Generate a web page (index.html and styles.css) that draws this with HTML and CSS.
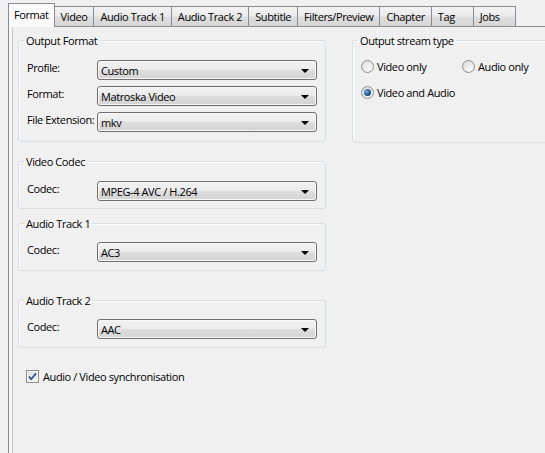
FILE: index.html
```html
<!DOCTYPE html>
<html>
<head>
  <title>Format</title>
  <link rel="stylesheet" href="styles.css">
</head>
<body>
  <div class="tabs">
    <div class="tab active">Format</div>
    <div class="tab">Video</div>
    <div class="tab">Audio Track 1</div>
    <div class="tab">Audio Track 2</div>
    <div class="tab">Subtitle</div>
    <div class="tab">Filters/Preview</div>
    <div class="tab">Chapter</div>
    <div class="tab wide">Tag</div>
    <div class="tab wide">Jobs</div>
  </div>

  <div class="pane">
    <div class="col-left">
      <fieldset class="group output">
        <legend>Output Format</legend>
        <div class="row">
          <label>Profile:</label>
          <div class="combo">Custom<span class="arrow"></span></div>
        </div>
        <div class="row">
          <label>Format:</label>
          <div class="combo">Matroska Video<span class="arrow"></span></div>
        </div>
        <div class="row">
          <label>File Extension:</label>
          <div class="combo">mkv<span class="arrow"></span></div>
        </div>
      </fieldset>

      <fieldset class="group video">
        <legend>Video Codec</legend>
        <div class="row">
          <label>Codec:</label>
          <div class="combo">MPEG-4 AVC / H.264<span class="arrow"></span></div>
        </div>
      </fieldset>

      <fieldset class="group audio1">
        <legend>Audio Track 1</legend>
        <div class="row">
          <label>Codec:</label>
          <div class="combo">AC3<span class="arrow"></span></div>
        </div>
      </fieldset>

      <fieldset class="group audio2">
        <legend>Audio Track 2</legend>
        <div class="row">
          <label>Codec:</label>
          <div class="combo">AAC<span class="arrow"></span></div>
        </div>
      </fieldset>

      <div class="check-row">
        <span class="check">
          <svg width="9" height="9" viewBox="0 0 9 9"><path d="M1 4.5 L3.3 7.2 L8 1.2" fill="none" stroke="#30508f" stroke-width="1.8"/></svg>
        </span>
        Audio / Video synchronisation
      </div>
    </div>

    <div class="col-right">
      <fieldset class="group stream">
        <legend>Output stream type</legend>
        <div class="radio-row">
          <span class="radio-item first"><span class="radio"></span>Video only</span>
          <span class="radio-item"><span class="radio"></span>Audio only</span>
        </div>
        <div class="radio-row">
          <span class="radio-item"><span class="radio on"></span>Video and Audio</span>
        </div>
      </fieldset>
    </div>
  </div>
</body>
</html>
```

FILE: styles.css
```css
body {
  margin: 0;
  background-color: #f0f0f0;
  font-family: "Open Sans", sans-serif;
  font-size: 11px;
  letter-spacing: -0.4px;
  color: #000;
  overflow: hidden;
  width: 545px;
  height: 453px;
}

.tabs {
  display: flex;
  align-items: flex-end;
  height: 27px;
  padding-left: 8px;
  position: relative;
  z-index: 1;
}
.tab {
  height: 20px;
  line-height: 19px;
  padding: 0 6px;
  margin-right: -1px;
  border: 1px solid #898c95;
  border-bottom: none;
  background: linear-gradient(#f3f3f3, #ebebeb 45%, #dddddd 55%, #d6d6d6);
  box-sizing: border-box;
  margin-bottom: 1px;
}
.tab.wide {
  min-width: 43px;
}
.tab.active {
  height: 24px;
  line-height: 21px;
  padding: 0 5px;
  background: #fafafa;
  margin-bottom: 0;
  position: relative;
  z-index: 2;
}

.pane {
  display: flex;
  gap: 26px;
  width: 600px;
  height: 430px;
  margin-left: 8px;
  margin-top: -1px;
  padding: 6px 0 0 9px;
  border-top: 1px solid #898c95;
  border-left: 1px solid #898c95;
  box-shadow: inset 3px 0 0 #f5f5f5, inset 4px 0 0 #c4c4c4;
}
.col-left {
  width: 308px;
  flex-shrink: 0;
}
.col-right {
  width: 220px;
  flex-shrink: 0;
}

.group {
  margin: 0;
  padding: 12px 8px 9px;
  border: 1px solid #d5dfe5;
  border-radius: 3px;
  box-shadow: inset 1px 1px 0 #fbfbfb;
}
.group legend {
  padding: 0 2px;
  margin-left: -3px;
  line-height: 15px;
}
.group.video {
  margin-top: 12px;
  padding-bottom: 7px;
}
.group.audio1 {
  margin-top: 7px;
  padding-top: 11px;
  padding-bottom: 8px;
}
.group.audio2 {
  margin-top: 22px;
  padding-top: 11px;
  padding-bottom: 8px;
}
.group.stream {
  padding-top: 8px;
  padding-bottom: 40px;
}

.row {
  display: flex;
  align-items: center;
  height: 20px;
  margin-bottom: 6px;
}
.row:last-child {
  margin-bottom: 0;
}
.row label {
  width: 70px;
  white-space: nowrap;
  position: relative;
  top: -3px;
}

.combo {
  position: relative;
  width: 220px;
  height: 20px;
  padding-left: 3px;
  padding-top: 2px;
  line-height: 16px;
  box-sizing: border-box;
  border: 1px solid #707070;
  border-radius: 3px;
  background: linear-gradient(#f2f2f2, #ebebeb 48%, #dddddd 52%, #d3d3d3);
  box-shadow: inset 0 0 0 1px #f8f8f8;
}
.arrow {
  position: absolute;
  right: 7px;
  top: 8px;
  width: 0;
  height: 0;
  border-left: 4px solid transparent;
  border-right: 4px solid transparent;
  border-top: 4px solid #000;
}

.check-row {
  display: flex;
  align-items: center;
  margin-top: 21px;
  margin-left: 8px;
  gap: 4px;
}
.check {
  width: 11px;
  height: 11px;
  border: 1px solid #8e8f8f;
  background: linear-gradient(135deg, #dcdcdc, #f6f6f6);
  box-shadow: inset 0 0 0 1px #f4f4f4;
  display: flex;
  align-items: center;
  justify-content: center;
}

.radio-row {
  display: flex;
  align-items: center;
  height: 20px;
  margin-bottom: 6px;
}
.radio-row:last-child {
  margin-bottom: 0;
}
.radio-item {
  display: flex;
  align-items: center;
  gap: 3px;
}
.radio-item.first {
  width: 101px;
}
.radio {
  width: 11px;
  height: 11px;
  border: 1px solid #8e8f8f;
  border-radius: 50%;
  background: radial-gradient(circle at 65% 70%, #f8f8f8, #d8d8d8);
  position: relative;
}
.radio.on::after {
  content: "";
  position: absolute;
  left: 2px;
  top: 2px;
  width: 7px;
  height: 7px;
  border-radius: 50%;
  background: radial-gradient(circle at 35% 35%, #6fb1e8, #1d4f8a 60%, #0c2d55);
}
```
